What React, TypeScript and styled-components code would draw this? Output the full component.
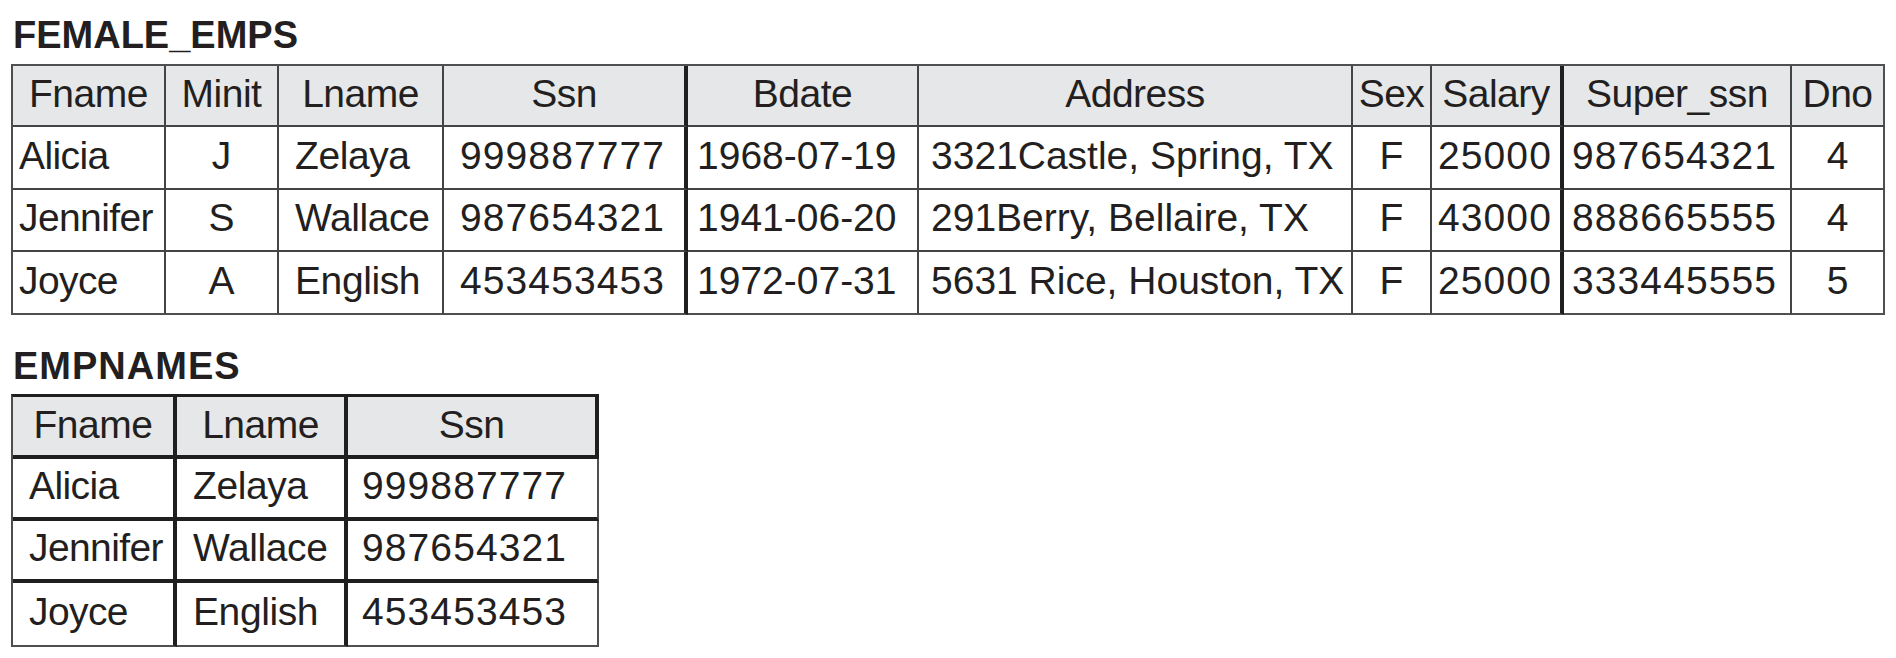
import React from "react";
import styled, { createGlobalStyle } from "styled-components";

const GlobalStyle = createGlobalStyle`
  html, body {
    margin: 0;
    padding: 0;
    background: #ffffff;
  }
  body {
    font-family: "Liberation Sans", Arial, Helvetica, sans-serif;
    color: #231f20;
  }
`;

const Page = styled.main`
  display: flex;
  flex-direction: column;
  gap: 32px;
  padding: 16px 0 0 11px;
  width: 1896px;
  height: 658px;
  box-sizing: border-box;
  overflow: hidden;
`;

const Section = styled.section<{ $gap: number }>`
  display: flex;
  flex-direction: column;
  align-items: flex-start;
  gap: ${(p) => p.$gap}px;
`;

const Title = styled.h2<{ $spacing: number }>`
  margin: 0 0 0 2px;
  font-size: 38px;
  line-height: 38px;
  font-weight: 700;
  letter-spacing: ${(p) => p.$spacing}px;
  color: #231f20;
`;

const Grid = styled.div<{ $cols: string; $rows: string; $topW: number; $topC: string }>`
  display: grid;
  grid-template-columns: ${(p) => p.$cols};
  grid-template-rows: ${(p) => p.$rows};
  border-top: ${(p) => p.$topW}px solid ${(p) => p.$topC};
  border-left: 2px solid #4d4d4d;
`;

const Cell = styled.div<{
  $head: boolean;
  $align: "left" | "center";
  $pad: number;
  $spacing: number;
  $rW: number;
  $rC: string;
  $bW: number;
  $bC: string;
}>`
  box-sizing: border-box;
  display: flex;
  align-items: center;
  justify-content: ${(p) => (p.$align === "center" ? "center" : "flex-start")};
  padding: 0 0 ${(p) => (p.$head ? 2 : 3)}px ${(p) => (p.$align === "center" ? 0 : p.$pad)}px;
  border-right: ${(p) => p.$rW}px solid ${(p) => p.$rC};
  border-bottom: ${(p) => p.$bW}px solid ${(p) => p.$bC};
  background: ${(p) => (p.$head ? "#e6e7e8" : "#ffffff")};
  font-size: 39px;
  line-height: 1.15;
  letter-spacing: ${(p) => p.$spacing}px;
  white-space: nowrap;
  overflow: hidden;
  color: #231f20;
`;

type Col = {
  name: string;
  width: number;
  align: "left" | "center";
  pad: number;
  spacing: number;
  thick?: boolean;
};

const THIN = "#444444";
const OUTER = "#505050";
const DARK = "#1f1f1f";

const femaleCols: Col[] = [
  { name: "Fname", width: 153, align: "left", pad: 6, spacing: -0.6 },
  { name: "Minit", width: 113, align: "center", pad: 0, spacing: 0 },
  { name: "Lname", width: 165, align: "left", pad: 16, spacing: -0.4 },
  { name: "Ssn", width: 244, align: "left", pad: 16, spacing: 1.1, thick: true },
  { name: "Bdate", width: 231, align: "left", pad: 9, spacing: 0 },
  { name: "Address", width: 434, align: "left", pad: 12, spacing: 0 },
  { name: "Sex", width: 79, align: "center", pad: 0, spacing: 0 },
  { name: "Salary", width: 132, align: "left", pad: 6, spacing: 1.1, thick: true },
  { name: "Super_ssn", width: 228, align: "left", pad: 8, spacing: 1.1 },
  { name: "Dno", width: 93, align: "center", pad: 0, spacing: 0 },
];

const femaleRows: string[][] = [
  ["Alicia", "J", "Zelaya", "999887777", "1968-07-19", "3321Castle, Spring, TX", "F", "25000", "987654321", "4"],
  ["Jennifer", "S", "Wallace", "987654321", "1941-06-20", "291Berry, Bellaire, TX", "F", "43000", "888665555", "4"],
  ["Joyce", "A", "English", "453453453", "1972-07-31", "5631 Rice, Houston, TX", "F", "25000", "333445555", "5"],
];

const empCols: Col[] = [
  { name: "Fname", width: 164, align: "left", pad: 16, spacing: -0.6 },
  { name: "Lname", width: 171, align: "left", pad: 16, spacing: -0.4 },
  { name: "Ssn", width: 251, align: "left", pad: 14, spacing: 1.1 },
];

const empRows: string[][] = [
  ["Alicia", "Zelaya", "999887777"],
  ["Jennifer", "Wallace", "987654321"],
  ["Joyce", "English", "453453453"],
];

const HEAD_SPACING = -0.5;

function FemaleEmps() {
  const cols = femaleCols.map((c) => `${c.width}px`).join(" ");
  const last = femaleCols.length - 1;
  const right = (i: number) => {
    if (femaleCols[i].thick) return { w: 4, c: DARK };
    if (i === last) return { w: 2, c: OUTER };
    return { w: 2, c: THIN };
  };
  return (
    <Section $gap={10}>
      <Title $spacing={0}>FEMALE_EMPS</Title>
      <Grid $cols={cols} $rows="61px 63px 62px 63px" $topW={2} $topC={OUTER}>
        {femaleCols.map((c, i) => (
          <Cell
            key={`h${i}`}
            $head
            $align="center"
            $pad={0}
            $spacing={HEAD_SPACING}
            $rW={right(i).w}
            $rC={right(i).c}
            $bW={2}
            $bC={THIN}
          >
            {c.name}
          </Cell>
        ))}
        {femaleRows.map((row, r) =>
          row.map((v, i) => (
            <Cell
              key={`${r}-${i}`}
              $head={false}
              $align={femaleCols[i].align}
              $pad={femaleCols[i].pad}
              $spacing={femaleCols[i].spacing}
              $rW={right(i).w}
              $rC={right(i).c}
              $bW={2}
              $bC={r === femaleRows.length - 1 ? OUTER : THIN}
            >
              {v}
            </Cell>
          ))
        )}
      </Grid>
    </Section>
  );
}

function EmpNames() {
  const cols = empCols.map((c) => `${c.width}px`).join(" ");
  const last = empCols.length - 1;
  return (
    <Section $gap={9}>
      <Title $spacing={1}>EMPNAMES</Title>
      <Grid $cols={cols} $rows="62px 62px 62px 64px" $topW={3} $topC={DARK}>
        {empCols.map((c, i) => (
          <Cell
            key={`h${i}`}
            $head
            $align="center"
            $pad={0}
            $spacing={HEAD_SPACING}
            $rW={4}
            $rC={DARK}
            $bW={4}
            $bC={DARK}
          >
            {c.name}
          </Cell>
        ))}
        {empRows.map((row, r) =>
          row.map((v, i) => {
            const isLastRow = r === empRows.length - 1;
            return (
              <Cell
                key={`${r}-${i}`}
                $head={false}
                $align={empCols[i].align}
                $pad={empCols[i].pad}
                $spacing={empCols[i].spacing}
                $rW={i === last ? 2 : 4}
                $rC={i === last ? OUTER : DARK}
                $bW={isLastRow ? 2 : 4}
                $bC={isLastRow ? OUTER : DARK}
              >
                {v}
              </Cell>
            );
          })
        )}
      </Grid>
    </Section>
  );
}

export default function App() {
  return (
    <>
      <GlobalStyle />
      <Page>
        <FemaleEmps />
        <EmpNames />
      </Page>
    </>
  );
}
